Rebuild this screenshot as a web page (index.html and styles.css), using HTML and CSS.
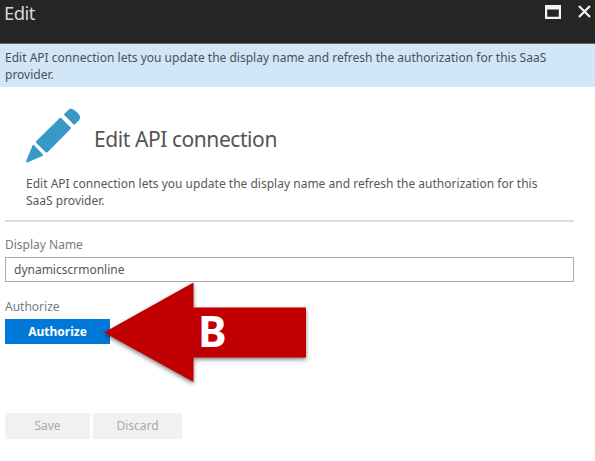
FILE: index.html
```html
<!DOCTYPE html>
<html lang="en">
<head>
<meta charset="utf-8">
<title>Edit</title>
<link rel="stylesheet" href="styles.css">
</head>
<body>
<div class="blade">
  <header class="titlebar">
    <h1 class="title">Edit</h1>
    <div class="window-actions">
      <svg class="icon-max" width="16" height="14" viewBox="0 0 16 14"><path d="M0 0H16V14H0ZM2.200 4.500V11.800H13.800V4.500Z" fill="#f4f4f4" fill-rule="evenodd"/></svg>
      <svg class="icon-close" width="13" height="13" viewBox="0 0 13 13"><path d="M1 1L12 12M12 1L1 12" stroke="#f0f0f0" stroke-width="2.3"/></svg>
    </div>
  </header>
  <div class="banner"><span class="banner-text">Edit API connection lets you update the display name and refresh the authorization for this SaaS</span><br>provider.</div>
  <main class="content">
    <section class="intro">
      <div class="intro-head">
        <svg class="pencil" width="55" height="55" viewBox="0 0 55 55" fill="#3999c6">
          <path d="M37.8 6.4L42.2 1.9Q44.600 -.4 48.5 2.3Q54 6.3 54.1 9.6Q54 11.3 52.8 12.5L48.2 17Z"/>
          <path d="M33.6 10.2Q34.5 9.4 35.4 10.2L44.5 19.3Q45.3 20.2 44.5 21.1L21.5 44.2Q20.6 45 19.7 44.2L10.3 34.9Q9.5 34 10.3 33.1Z"/>
          <path d="M6.5 37.4Q7.1 36.4 8 37.3L16.8 46.3Q17.5 47.4 16.4 48L1.8 54.3Q-.3 54.8 .4 52.6Z"/>
        </svg>
        <h2 class="heading">Edit API connection</h2>
      </div>
      <p class="description"><span class="description-text">Edit API connection lets you update the display name and refresh the authorization for this</span><br>SaaS provider.</p>
    </section>
    <form class="form">
      <label class="label" for="name">Display Name</label>
      <input class="field" id="name" type="text" value="dynamicscrmonline">
      <span class="label label-auth">Authorize</span>
      <div class="auth-row">
        <button class="authorize" type="button">Authorize</button>
        <div class="callout">
          <svg class="arrow" width="203" height="102" viewBox="0 0 203 102"><path d="M0 50.5L89.500 .5V25.500H202V75.500H89.500V100Z" fill="#c00000"/></svg>
          <span class="callout-text">B</span>
        </div>
      </div>
      <div class="actions">
        <button class="action save" type="button" disabled>Save</button>
        <button class="action discard" type="button" disabled>Discard</button>
      </div>
    </form>
  </main>
</div>
</body>
</html>
```

FILE: styles.css
```css
* { box-sizing: border-box; }
body {
  margin: 0;
  background: #fff;
  color: #585858;
  font-family: "Noto Sans", "Open Sans", sans-serif;
  font-size: 12px;
}
.blade { width: 595px; height: 461px; overflow: hidden; }
.titlebar {
  display: flex;
  justify-content: space-between;
  height: 44px;
  padding: 0 3px 0 4px;
  background: #252525;
  border-bottom: 1px solid #66625f;
}
.title { margin: 0; color: #d8d8d8; font-size: 18.5px; line-height: 26px; font-weight: 400; letter-spacing: -.6px; }
.window-actions { display: flex; align-items: flex-start; gap: 17px; padding-top: 5px; margin-right: 1px; }
.banner {
  height: 43px;
  padding: 5px 5px 0;
  background: #d1e6f6;
  color: #48525a;
  line-height: 17px;
  white-space: nowrap;
}
.banner-text, .description-text { letter-spacing: .01px; }
.content { padding: 0 21px 0 5px; }
.intro { height: 135px; padding: 21px 0 0 21px; border-bottom: 2px solid #dcdcdc; }
.intro-head { display: flex; gap: 13px; }
.heading { margin: 15px 0 0; color: #555; font-size: 21px; line-height: 32px; font-weight: 400; letter-spacing: -.43px; }
.description { margin: 12px 0 0; line-height: 17px; white-space: nowrap; }
.form { display: flex; flex-direction: column; align-items: flex-start; padding-top: 14px; }
.label { color: #7a7a7a; line-height: 18px; }
.field {
  width: 569px;
  height: 25px;
  margin-top: 3px;
  padding: 0 8px;
  border: 1px solid #aaa;
  background: #fff;
  color: #585858;
  font: inherit;
}
.label-auth { margin-top: 16px; }
.auth-row { position: relative; margin-top: 3px; }
.authorize {
  display: block;
  width: 105px;
  height: 25px;
  padding: 0;
  border: 0;
  background: #0078d7;
  color: #fff;
  font: 700 12px/25px "Noto Sans", sans-serif;
}
.callout { position: absolute; left: 99px; top: -37px; width: 203px; height: 102px; }
.arrow { display: block; overflow: visible; filter: drop-shadow(0 2px 2px rgba(0, 0, 0, .5)); }
.callout-text {
  position: absolute;
  left: 94px;
  top: 24px;
  color: #fff;
  font: 700 43px/50px "Noto Sans", sans-serif;
}
.actions { display: flex; gap: 3px; margin-top: 69px; }
.action {
  height: 26px;
  padding: 0;
  border: 0;
  background: #f1f1f1;
  color: #aaa;
  font: 400 12px/26px "Noto Sans", sans-serif;
}
.save { width: 85px; }
.discard { width: 89px; }
```
